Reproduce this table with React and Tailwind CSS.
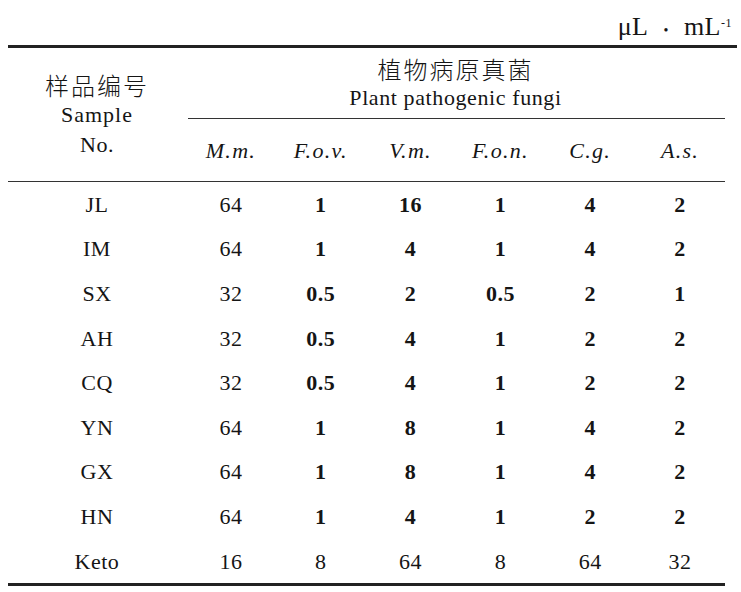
import React from "react";

const fungi = ["M.m.", "F.o.v.", "V.m.", "F.o.n.", "C.g.", "A.s."];

const rows = [
  ["JL", "64", "1", "16", "1", "4", "2"],
  ["IM", "64", "1", "4", "1", "4", "2"],
  ["SX", "32", "0.5", "2", "0.5", "2", "1"],
  ["AH", "32", "0.5", "4", "1", "2", "2"],
  ["CQ", "32", "0.5", "4", "1", "2", "2"],
  ["YN", "64", "1", "8", "1", "4", "2"],
  ["GX", "64", "1", "8", "1", "4", "2"],
  ["HN", "64", "1", "4", "1", "2", "2"],
  ["Keto", "16", "8", "64", "8", "64", "32"],
];

const cjk = "font-[family-name:'Noto_Sans_CJK_SC',sans-serif] font-light";

export default function App() {
  return (
    <div className="h-[592px] w-[741px] overflow-hidden bg-white font-[family-name:'Liberation_Serif','Times_New_Roman',serif] text-[22px] tracking-[0.5px] text-[#151515]">
      {/* unit */}
      <div className="flex h-[45px] items-end justify-end pb-[5px] pr-[9px] text-[26px] leading-none">
        <span className="flex items-baseline">
          <span>μL</span>
          <span className="mx-[15px] text-[14px]">•</span>
          <span>mL</span>
          <sup className="relative -top-[8px] text-[12px]">-1</sup>
        </span>
      </div>
      <div className="ml-[8px] h-[3px] w-[729px] bg-[#222]" />

      <div className="ml-[8px] w-[717px]">
        {/* header */}
        <div className="grid h-[133px] grid-cols-[178px_1fr]">
          <div className="flex flex-col items-center pt-[22px] leading-[30px]">
            <span className={`${cjk} text-[24px] tracking-[2px]`}>样品编号</span>
            <span className="tracking-[1px]">Sample</span>
            <span>No.</span>
          </div>
          <div className="flex flex-col">
            <div className="flex h-[70px] flex-col items-center pt-[6px] leading-[29px]">
              <span className={`${cjk} text-[24px] tracking-[2px]`}>植物病原真菌</span>
              <span className="tracking-[0.6px]">Plant pathogenic fungi</span>
            </div>
            <div className="ml-[2px] h-px bg-[#333]" />
            <div className="grid h-[62px] grid-cols-6 items-center">
              {fungi.map((f) => (
                <span key={f} className="text-center italic tracking-[1.3px]">
                  {f}
                </span>
              ))}
            </div>
          </div>
        </div>
        <div className="h-px bg-[#333]" />

        {/* body */}
        {rows.map((r) => (
          <div key={r[0]} className="grid h-[44.6px] grid-cols-[178px_repeat(6,1fr)] items-center text-center">
            {r.map((v, i) => (
              <span key={i} className={i > 1 && r[0] !== "Keto" ? "font-bold" : ""}>
                {v}
              </span>
            ))}
          </div>
        ))}
        <div className="h-[3px] bg-[#222]" />
      </div>
    </div>
  );
}
